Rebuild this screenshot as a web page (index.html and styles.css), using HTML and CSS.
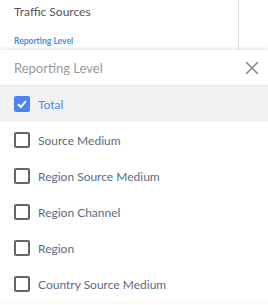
FILE: index.html
```html
<!DOCTYPE html>
<html lang="en">
<head>
    <meta charset="UTF-8">
    <title>Reporting Level</title>
    <link rel="stylesheet" href="styles.css">
</head>
<body>
    <div class="page">
        <div class="main">
            <div class="title">Traffic Sources</div>
            <div class="sublink">Reporting Level</div>
        </div>
        <div class="side"></div>
    </div>

    <div class="sheet">
        <div class="sheet-head">
            <span>Reporting Level</span>
            <svg class="close" width="16" height="16" viewBox="0 0 16 16">
                <path d="M2 2 L14 14 M14 2 L2 14" stroke="#8a8a8a" stroke-width="1.6" fill="none"/>
            </svg>
        </div>
        <ul class="options">
            <li class="option selected"><span class="box checked"><svg width="12" height="12" viewBox="0 0 12 12"><path d="M2 6.2 L4.8 9 L10 3.2" stroke="#fff" stroke-width="2" fill="none"/></svg></span>Total</li>
            <li class="option"><span class="box"></span>Source Medium</li>
            <li class="option"><span class="box"></span>Region Source Medium</li>
            <li class="option"><span class="box"></span>Region Channel</li>
            <li class="option"><span class="box"></span>Region</li>
            <li class="option"><span class="box"></span>Country Source Medium</li>
        </ul>
    </div>
</body>
</html>
```

FILE: styles.css
```css
body {
    margin: 0;
    font-family: Lato, "Open Sans", Arial, sans-serif;
    background-color: #fff;
    width: 268px;
    height: 305px;
    overflow: hidden;
}

.page {
    display: flex;
    height: 50px;
}

.main {
    width: 239px;
    border-right: 1px solid #dcdcdc;
    padding-left: 14px;
    box-sizing: border-box;
}

.title {
    margin-top: 4px;
    font-size: 12px;
    color: #555;
    line-height: 16px;
}

.sublink {
    margin-top: 16px;
    font-size: 8.5px;
    font-weight: bold;
    color: #4a8af4;
    line-height: 10px;
}

.sheet {
    position: relative;
    background-color: #fff;
    box-shadow: 0 -1px 4px rgba(0, 0, 0, 0.12);
}

.sheet-head {
    display: flex;
    align-items: center;
    justify-content: space-between;
    height: 35px;
    padding: 0 8px 0 14px;
    border-bottom: 1px solid #e2e2e2;
    font-size: 13px;
    color: #9a9a9a;
}

.options {
    list-style: none;
    margin: 0;
    padding: 0;
}

.option {
    display: flex;
    align-items: center;
    height: 36px;
    padding-left: 14px;
    font-size: 12px;
    color: #5b6b82;
}

.option.selected {
    background-color: #f2f2f2;
    color: #4d8af0;
}

.box {
    width: 16px;
    height: 16px;
    box-sizing: border-box;
    border: 2px solid #666;
    border-radius: 2px;
    margin-right: 8px;
    display: flex;
    align-items: center;
    justify-content: center;
}

.box.checked {
    background-color: #4a86f0;
    border-color: #4a86f0;
}
```
